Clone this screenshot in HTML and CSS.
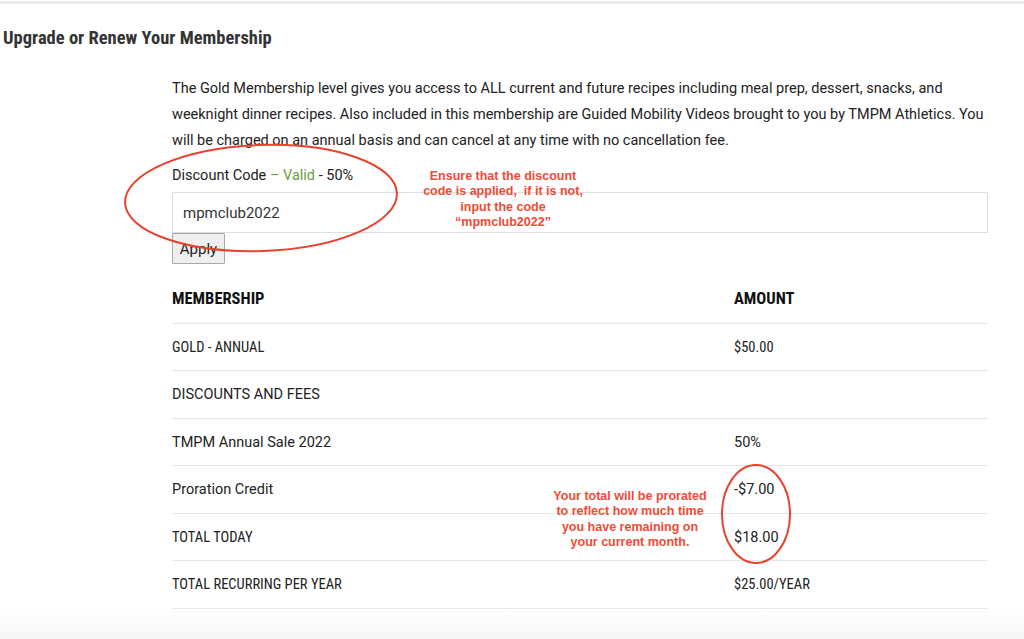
FILE: index.html
```html
<!DOCTYPE html>
<html>
<head>
<meta charset="utf-8">
<link rel="stylesheet" href="styles.css">
</head>
<body>
<div class="page">
  <div class="topline"></div>
  <h2 class="title">Upgrade or Renew Your Membership</h2>
  <div class="content">
    <p class="desc">The Gold Membership level gives you access to ALL current and future recipes including meal prep, dessert, snacks, and weeknight dinner recipes. Also included in this membership are Guided Mobility Videos brought to you by TMPM Athletics. You will be charged on an annual basis and can cancel at any time with no cancellation fee.</p>
    <div class="code-label">Discount Code <span class="valid">– Valid</span> - 50%</div>
    <div class="code-input">mpmclub2022</div>
    <button class="apply">Apply</button>
    <table class="summary">
      <tr class="head"><th class="c1">MEMBERSHIP</th><th>AMOUNT</th></tr>
      <tr class="odd"><td class="cond">GOLD - ANNUAL</td><td class="cond">$50.00</td></tr>
      <tr class="even"><td>DISCOUNTS AND FEES</td><td></td></tr>
      <tr class="odd"><td>TMPM Annual Sale 2022</td><td>50%</td></tr>
      <tr class="even"><td>Proration Credit</td><td>-$7.00</td></tr>
      <tr class="odd"><td class="cond">TOTAL TODAY</td><td>$18.00</td></tr>
      <tr class="even"><td class="cond">TOTAL RECURRING PER YEAR</td><td class="cond">$25.00/YEAR</td></tr>
    </table>
  </div>
  <div class="footer-fade"></div>

  <svg class="marks" width="1024" height="639" viewBox="0 0 1024 639">
    <ellipse cx="261" cy="198" rx="136" ry="53" transform="rotate(-2 261 198)" fill="none" stroke="#e8412c" stroke-width="2"/>
    <ellipse cx="756" cy="514" rx="34" ry="49" fill="none" stroke="#e8412c" stroke-width="2"/>
  </svg>
  <div class="note note1">Ensure that the discount<br>code is applied,&nbsp; if it is not,<br>input the code<br>“mpmclub2022”</div>
  <div class="note note2">Your total will be prorated<br>to reflect how much time<br>you have remaining on<br>your current month.</div>
</div>
</body>
</html>
```
FILE: styles.css
```css
html, body {
  margin: 0;
  padding: 0;
  background: #fff;
}
.page {
  position: relative;
  width: 1024px;
  height: 639px;
  overflow: hidden;
  font-family: Roboto, "Liberation Sans", sans-serif;
  color: #222;
}
.topline {
  height: 3px;
  background: #ececec;
  margin-top: 1px;
}
.title {
  margin: 22px 0 0 3px;
  font-family: "Roboto Condensed", "Liberation Sans Narrow", "DejaVu Sans Condensed", sans-serif;
  font-weight: 700;
  font-size: 18.5px;
  line-height: 24px;
  color: #333;
}
.content {
  margin-left: 172px;
  width: 816px;
}
.desc {
  margin: 26px 0 0 0;
  font-size: 14.5px;
  line-height: 26px;
  color: #222;
}
.code-label {
  margin-top: 12px;
  font-size: 14.5px;
  line-height: 20px;
  color: #222;
}
.valid {
  color: #6a9e3c;
}
.code-input {
  margin-top: 6px;
  height: 41px;
  box-sizing: border-box;
  border: 1px solid #dedede;
  padding: 0 10px;
  display: flex;
  align-items: center;
  font-size: 15px;
  color: #333;
}
.apply {
  display: block;
  margin: 0;
  width: 53px;
  height: 31px;
  padding: 0;
  box-sizing: border-box;
  background: #efefef;
  border: 1px solid #a9a9a9;
  border-radius: 1px;
  font-family: Roboto, "Liberation Sans", sans-serif;
  font-size: 15px;
  color: #222;
  line-height: 26px;
}
.summary {
  width: 816px;
  border-collapse: collapse;
  margin-top: 10px;
}
.summary th, .summary td {
  text-align: left;
  padding: 0;
  border-bottom: 1px solid #e6e6e6;
  font-size: 14.5px;
  color: #222;
  vertical-align: middle;
}
.summary tr.odd td {
  height: 46px;
}
.summary tr.even td {
  height: 47px;
}
.summary tr.head th {
  height: 49px;
  font-family: "Roboto Condensed", "Liberation Sans Narrow", "DejaVu Sans Condensed", sans-serif;
  font-weight: 700;
  font-size: 16.5px;
  color: #111;
}
.summary .c1 {
  width: 562px;
}
.summary td.cond {
  font-family: "Roboto Condensed", "Liberation Sans Narrow", "DejaVu Sans Condensed", sans-serif;
  font-size: 14.5px;
}
.footer-fade {
  height: 40px;
  background: linear-gradient(#fff, #f3f3f3);
}
.marks {
  position: absolute;
  left: 0;
  top: 0;
  pointer-events: none;
}
.note {
  position: absolute;
  font-family: "Liberation Sans", Arial, sans-serif;
  font-weight: 700;
  font-size: 12.5px;
  line-height: 15.3px;
  color: #ef4b36;
  text-align: center;
}
.note1 {
  left: 393px;
  top: 169px;
  width: 220px;
}
.note2 {
  left: 520px;
  top: 489px;
  width: 220px;
}
```
